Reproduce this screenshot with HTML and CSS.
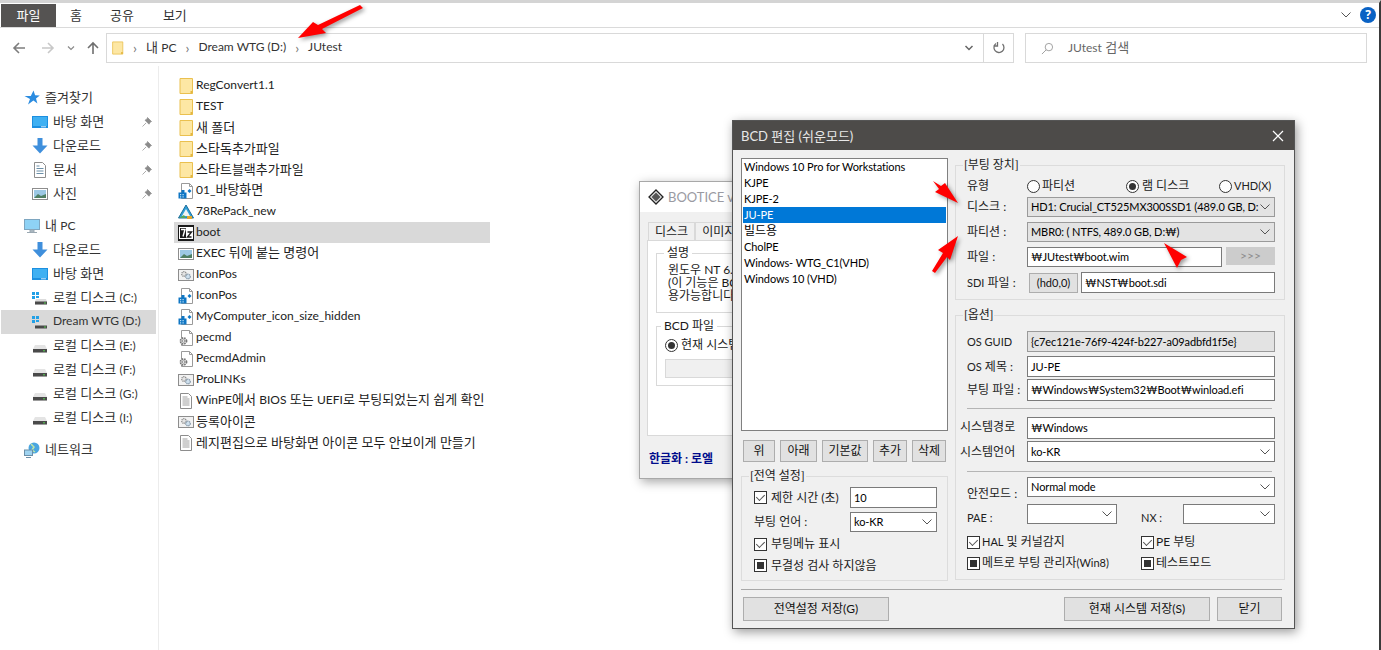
FILE: index.html
```html
<!DOCTYPE html>
<html lang="ko">
<head>
<meta charset="utf-8">
<title>JUtest</title>
<link rel="stylesheet" href="styles.css">
</head>
<body>
<svg class="defs" aria-hidden="true">
  <symbol id="i-folder" viewBox="0 0 16 16"><path d="M2 .5h12.500v15H2z" fill="#fde7a4" stroke="#eac04f"/><path d="M12.500 13h2v2.500h-2z" fill="#e3b63f"/></symbol>
  <symbol id="i-desktop" viewBox="0 0 16 16"><rect x="0" y="2" width="16" height="12" fill="#1c8fe0"/><rect x="1" y="3" width="14" height="9" fill="#3fb0f2"/><rect x="9" y="12.300" width="5" height="1" fill="#cfe9fb"/></symbol>
  <symbol id="i-down" viewBox="0 0 16 16"><path d="M5.500 0h5v7.500h5L8 15.500.5 7.500h5z" fill="#3f8fdc"/></symbol>
  <symbol id="i-doc" viewBox="0 0 16 16"><path d="M2.500.5h8l3 3v12h-11z" fill="#fff" stroke="#8d8d8d"/><path d="M4.500 4h3M4.500 6.500h7M4.500 9h7M4.500 11.500h7" stroke="#6b8fa8"/></symbol>
  <symbol id="i-pic" viewBox="0 0 16 16"><rect x=".5" y="2.500" width="15" height="11" fill="#fff" stroke="#8d8d8d"/><rect x="2" y="4" width="12" height="8" fill="#9cc8e4"/><path d="M2 12l4-4 3 2 5-2v4z" fill="#4f7f63"/></symbol>
  <symbol id="i-pin" viewBox="0 0 10 10"><path d="M5.500.5l4 4-1.200.6-1.300 2.100L3 3.200l2.100-1.300zM4 6l-3.500 3.500" fill="#8b8b8b" stroke="#8b8b8b" stroke-width=".7"/></symbol>
  <symbol id="i-pc" viewBox="0 0 16 16"><rect x=".5" y="1.500" width="15" height="10" fill="#8ed2f5" stroke="#7ea6c0"/><path d="M6 12h4v2H6zM3 14.500h10" fill="#b7c4cc" stroke="#9aa8b2"/></symbol>
  <symbol id="i-star" viewBox="0 0 16 16"><path d="M9.500.5l1.600 4.800 4.700.2-3.800 3 1.400 5-4-2.900-5.400 3.900L6 9 .5 6h6.300z" fill="#2b8ce0"/></symbol>
  <symbol id="i-drive" viewBox="0 0 16 16"><path d="M3 7h10l2 4v3.500H1V11z" fill="#e4e4e4"/><rect x="1" y="11" width="14" height="3.500" fill="#4a4a4a"/><rect x="11" y="12.300" width="2" height="1" fill="#55d04f"/></symbol>
  <symbol id="i-sysdrive" viewBox="0 0 16 16"><path d="M4 9h10l1 2.500v3H3v-3z" fill="#dcdcdc"/><rect x="3" y="11.500" width="12" height="3" fill="#4a4a4a"/><rect x="12" y="12.500" width="2" height="1" fill="#55d04f"/><path d="M0 2h3v3H0zM4 2h3v3H4zM0 6h3v3H0zM4 6h3v2H4z" fill="#22a0e6"/></symbol>
  <symbol id="i-net" viewBox="0 0 16 16"><circle cx="10" cy="6" r="5.500" fill="#4aa6e0"/><path d="M7 2l3 3-2 3 3 2" stroke="#bfe6a8" fill="none" stroke-width="1.500"/><rect x=".5" y="8" width="8" height="5.500" fill="#9fd3f0" stroke="#6b8fa8"/><path d="M2 15.500h5" stroke="#6b8fa8"/></symbol>
  <symbol id="i-reg" viewBox="0 0 16 16"><path d="M3.500.5h8l3 3v12h-11z" fill="#fff" stroke="#9a9a9a"/><path d="M11.500.5v3h3" fill="none" stroke="#9a9a9a"/><path d="M.5 9.500h8v6h-8z" fill="#0f76c4"/><path d="M3.500 7h3v3h-3z" fill="#0f76c4"/><path d="M9.500 8l2-2 2 2-2 2z" fill="#0f76c4"/><path d="M2 11h1.200v1.200H2zM4.500 11h1.200v1.200H4.500zM2 13.300h1.200v1.200H2zM4.500 13.300h1.200v1.200H4.500z" fill="#bfe2f7"/></symbol>
  <symbol id="i-wim" viewBox="0 0 16 16"><path d="M8 1L15.500 14H.5z" fill="#2f9fd8" stroke="#1c6d9a"/><path d="M8 5l4 7H4z" fill="#f3f3f3"/><path d="M1 14h7l-2-3z" fill="#58a85a"/><rect x="9" y="12" width="5" height="3" fill="#e2a72c"/></symbol>
  <symbol id="i-7z" viewBox="0 0 16 16"><rect width="16" height="16" fill="#1a1a1a"/><rect x="1" y="2" width="14" height="12" fill="#fff"/><rect x="2" y="3" width="6" height="10" fill="#1a1a1a"/><path d="M3 4.500h4l-2 7" stroke="#fff" stroke-width="1.400" fill="none"/><path d="M9.500 7h4l-4 5h4" stroke="#1a1a1a" stroke-width="1.400" fill="none"/></symbol>
  <symbol id="i-ini" viewBox="0 0 16 16"><rect x=".5" y="2.500" width="15" height="11" fill="#f2f2f2" stroke="#8d8d8d"/><circle cx="6" cy="7" r="2.300" fill="#e4e4e4" stroke="#8a8a8a" stroke-width="1.200" stroke-dasharray="1.200 .6"/><circle cx="10" cy="9.500" r="2.300" fill="#cfe0ee" stroke="#7f93a5" stroke-width="1.200" stroke-dasharray="1.200 .6"/></symbol>
  <symbol id="i-cmd" viewBox="0 0 16 16"><path d="M3.500.5h8l3 3v12h-11z" fill="#fff" stroke="#9a9a9a"/><path d="M11.500.5v3h3" fill="none" stroke="#9a9a9a"/><circle cx="5.500" cy="11" r="3" fill="#e6e6e6" stroke="#777" stroke-width="1.800" stroke-dasharray="1.500 .9"/><circle cx="5.500" cy="11" r="1.200" fill="#fff" stroke="#777" stroke-width=".7"/></symbol>
  <symbol id="i-txt" viewBox="0 0 16 16"><path d="M2.500.5h8l3 3v12h-11z" fill="#fff" stroke="#8d8d8d"/><path d="M4.500 4h5M4.500 6h7M4.500 8h7M4.500 10h7M4.500 12h7" stroke="#a0a0a0"/></symbol>
  <symbol id="i-chev" viewBox="0 0 12 12"><path d="M1.500 3.500L6 8l4.500-4.500" fill="none" stroke="#555" stroke-width="1"/></symbol>
</svg>

<div class="explorer">
  <div class="tabs">
    <span class="tab tab-file">파일</span>
    <span class="tab tab-home">홈</span>
    <span class="tab tab-share">공유</span>
    <span class="tab tab-view">보기</span>
    <svg class="ribbon-chev"><use href="#i-chev"/></svg>
    <span class="help">?</span>
  </div>
  <div class="navbar">
    <div class="navbtns">
      <svg class="nav-arrow" viewBox="0 0 14 14"><path d="M13 7H2M7 2L2 7l5 5" fill="none" stroke="#7d7d7d" stroke-width="1.600"/></svg>
      <svg class="nav-arrow" viewBox="0 0 14 14"><path d="M1 7h11M7 2l5 5-5 5" fill="none" stroke="#c8c8c8" stroke-width="1.600"/></svg>
      <svg class="nav-small" viewBox="0 0 8 8"><path d="M1 2.500L4 5.500l3-3" fill="none" stroke="#8a8a8a" stroke-width="1.200"/></svg>
      <svg class="nav-arrow" viewBox="0 0 14 14"><path d="M7 13V2M2 7l5-5 5 5" fill="none" stroke="#6f6f6f" stroke-width="1.600"/></svg>
    </div>
    <div class="address">
      <svg class="addr-folder"><use href="#i-folder"/></svg>
      <span class="crumb-sep">›</span><span class="crumb">내 <span class="lat">PC</span></span>
      <span class="crumb-sep">›</span><span class="crumb lat">Dream WTG (D:)</span>
      <span class="crumb-sep">›</span><span class="crumb lat">JUtest</span>
      <svg class="addr-chev" viewBox="0 0 10 10"><path d="M1.500 3L5 6.500 8.500 3" fill="none" stroke="#666" stroke-width="1.500"/></svg>
      <span class="addr-refresh"><svg class="refresh" viewBox="0 0 14 14"><path d="M4 2.500a5 5 0 1 0 6.500.5M5.500 1v4H1.500" fill="none" stroke="#6f6f6f" stroke-width="1.300"/></svg></span>
    </div>
    <div class="search">
      <svg class="search-ico" viewBox="0 0 14 14"><circle cx="8.500" cy="5.500" r="4" fill="none" stroke="#9a9a9a"/><path d="M5.500 8.500L1 13" stroke="#9a9a9a"/></svg>
      <span class="crumb"><span class="lat">JUtest</span> 검색</span>
    </div>
  </div>
  <div class="main">
    <nav class="side">
      <div class="side-head first"><svg class="ico"><use href="#i-star"/></svg><span>즐겨찾기</span></div>
      <div class="side-item"><svg class="ico"><use href="#i-desktop"/></svg><span class="grow">바탕 화면</span><svg class="pin"><use href="#i-pin"/></svg></div>
      <div class="side-item"><svg class="ico"><use href="#i-down"/></svg><span class="grow">다운로드</span><svg class="pin"><use href="#i-pin"/></svg></div>
      <div class="side-item"><svg class="ico"><use href="#i-doc"/></svg><span class="grow">문서</span><svg class="pin"><use href="#i-pin"/></svg></div>
      <div class="side-item"><svg class="ico"><use href="#i-pic"/></svg><span class="grow">사진</span><svg class="pin"><use href="#i-pin"/></svg></div>
      <div class="side-head gap"><svg class="ico"><use href="#i-pc"/></svg><span>내 <span class="lat">PC</span></span></div>
      <div class="side-item"><svg class="ico"><use href="#i-down"/></svg><span>다운로드</span></div>
      <div class="side-item"><svg class="ico"><use href="#i-desktop"/></svg><span>바탕 화면</span></div>
      <div class="side-item"><svg class="ico"><use href="#i-sysdrive"/></svg><span>로컬 디스크 <span class="lat">(C:)</span></span></div>
      <div class="side-item active"><svg class="ico"><use href="#i-sysdrive"/></svg><span class="lat">Dream WTG (D:)</span></div>
      <div class="side-item"><svg class="ico"><use href="#i-drive"/></svg><span>로컬 디스크 <span class="lat">(E:)</span></span></div>
      <div class="side-item"><svg class="ico"><use href="#i-drive"/></svg><span>로컬 디스크 <span class="lat">(F:)</span></span></div>
      <div class="side-item"><svg class="ico"><use href="#i-drive"/></svg><span>로컬 디스크 <span class="lat">(G:)</span></span></div>
      <div class="side-item"><svg class="ico"><use href="#i-drive"/></svg><span>로컬 디스크 <span class="lat">(I:)</span></span></div>
      <div class="side-head gap"><svg class="ico"><use href="#i-net"/></svg><span>네트워크</span></div>
    </nav>
    <ul class="files">
      <li><svg class="ico"><use href="#i-folder"/></svg><span class="lat">RegConvert1.1</span></li>
      <li><svg class="ico"><use href="#i-folder"/></svg><span class="lat">TEST</span></li>
      <li><svg class="ico"><use href="#i-folder"/></svg><span>새 폴더</span></li>
      <li><svg class="ico"><use href="#i-folder"/></svg><span>스타독추가파일</span></li>
      <li><svg class="ico"><use href="#i-folder"/></svg><span>스타트블랙추가파일</span></li>
      <li><svg class="ico"><use href="#i-reg"/></svg><span><span class="lat">01_</span>바탕화면</span></li>
      <li><svg class="ico"><use href="#i-wim"/></svg><span class="lat">78RePack_new</span></li>
      <li class="selected"><svg class="ico"><use href="#i-7z"/></svg><span class="lat">boot</span></li>
      <li><svg class="ico"><use href="#i-pic"/></svg><span><span class="lat">EXEC</span> 뒤에 붙는 명령어</span></li>
      <li><svg class="ico"><use href="#i-ini"/></svg><span class="lat">IconPos</span></li>
      <li><svg class="ico"><use href="#i-reg"/></svg><span class="lat">IconPos</span></li>
      <li><svg class="ico"><use href="#i-reg"/></svg><span class="lat">MyComputer_icon_size_hidden</span></li>
      <li><svg class="ico"><use href="#i-cmd"/></svg><span class="lat">pecmd</span></li>
      <li><svg class="ico"><use href="#i-cmd"/></svg><span class="lat">PecmdAdmin</span></li>
      <li><svg class="ico"><use href="#i-ini"/></svg><span class="lat">ProLINKs</span></li>
      <li><svg class="ico"><use href="#i-txt"/></svg><span><span class="lat">WinPE</span>에서 <span class="lat">BIOS</span> 또는 <span class="lat">UEFI</span>로 부팅되었는지 쉽게 확인</span></li>
      <li><svg class="ico"><use href="#i-ini"/></svg><span>등록아이콘</span></li>
      <li><svg class="ico"><use href="#i-txt"/></svg><span>레지편집으로 바탕화면 아이콘 모두 안보이게 만들기</span></li>
    </ul>
  </div>
</div>

<section class="win bootice">
  <header class="bootice-title">
    <svg class="bootice-ico" viewBox="0 0 16 16"><path d="M8 1l7 7-7 7-7-7z" fill="#e8e8e8" stroke="#222" stroke-width="1.300"/><path d="M3.500 8L8 3.500 12.500 8 8 12.500z" fill="#555"/></svg>
    <span>BOOTICE v1</span>
  </header>
  <div class="bootice-tabs"><span class="btab">디스크</span><span class="btab">이미지</span></div>
  <div class="bootice-panel">
    <fieldset class="bgroup bgroup-a">
      <legend>설명</legend>
      <p>윈도우 NT 6.x<br>(이 기능은 BC<br>용가능합니다</p>
    </fieldset>
    <fieldset class="bgroup bgroup-b">
      <legend>BCD 파일</legend>
      <div class="bradio"><i class="radio on"></i>현재 시스템</div>
      <div class="bfield"></div>
    </fieldset>
  </div>
  <div class="bootice-foot">한글화 : 로엘</div>
</section>

<section class="win dialog">
  <header class="dlg-title"><span>BCD 편집 (쉬운모드)</span>
    <svg class="dlg-close" viewBox="0 0 12 12"><path d="M1 1l10 10M11 1L1 11" stroke="#fff" stroke-width="1.200"/></svg>
  </header>
  <div class="dlg-body">
    <div class="dlg-left">
      <ul class="listbox">
        <li>Windows 10 Pro for Workstations</li>
        <li>KJPE</li>
        <li>KJPE-2</li>
        <li class="sel">JU-PE</li>
        <li><span class="k">빌드용</span></li>
        <li>CholPE</li>
        <li>Windows- WTG_C1(VHD)</li>
        <li>Windows 10 (VHD)</li>
      </ul>
      <div class="list-btns">
        <span class="btn b-up">위</span><span class="btn b-down">아래</span><span class="btn b-def">기본값</span><span class="btn b-add">추가</span><span class="btn b-del">삭제</span>
      </div>
      <div class="group group-global">
        <span class="legend">[전역 설정]</span>
        <div class="g-row g-r1"><i class="chk on"></i><span class="g-label">제한 시간 (초)</span><span class="field g-field">10</span></div>
        <div class="g-row g-r2"><span class="g-label2">부팅 언어 :</span><span class="field combo g-field">ko-KR<svg class="chev"><use href="#i-chev"/></svg></span></div>
        <div class="g-row g-r3"><i class="chk on"></i>부팅메뉴 표시</div>
        <div class="g-row g-r4"><i class="chk mid"></i>무결성 검사 하지않음</div>
      </div>
    </div>
    <div class="dlg-right">
      <div class="group group-boot">
        <span class="legend">[부팅 장치]</span>
        <div class="f-row r-type"><span class="lab">유형</span>
          <span class="rad rad1"><i class="radio"></i>파티션</span>
          <span class="rad rad2"><i class="radio on"></i>램 디스크</span>
          <span class="rad rad3"><i class="radio"></i><span class="lat">VHD(X)</span></span>
        </div>
        <div class="f-row r-disk"><span class="lab">디스크 :</span><span class="field combo ro wide">HD1: Crucial_CT525MX300SSD1 (489.0 GB, D:<svg class="chev"><use href="#i-chev"/></svg></span></div>
        <div class="f-row r-part"><span class="lab">파티션 :</span><span class="field combo ro wide">MBR0: ( NTFS, 489.0 GB, D:₩)<svg class="chev"><use href="#i-chev"/></svg></span></div>
        <div class="f-row r-file"><span class="lab">파일 :</span><span class="field file">₩JUtest₩boot.wim</span><span class="btn more">&gt;&gt;&gt;</span></div>
        <div class="f-row r-sdi"><span class="lab"><span class="lat">SDI</span> 파일 :</span><span class="btn hd">(hd0,0)</span><span class="field sdi">₩NST₩boot.sdi</span></div>
      </div>
      <div class="group group-opt">
        <span class="legend">[옵션]</span>
        <div class="f-row r-guid"><span class="lab lat">OS GUID</span><span class="field ro wide">{c7ec121e-76f9-424f-b227-a09adbfd1f5e}</span></div>
        <div class="f-row r-os"><span class="lab"><span class="lat">OS</span> 제목 :</span><span class="field wide">JU-PE</span></div>
        <div class="f-row r-bf"><span class="lab">부팅 파일 :</span><span class="field wide">₩Windows₩System32₩Boot₩winload.efi</span></div>
        <hr class="sep sep1">
        <div class="f-row r-sys"><span class="lab out up">시스템경로</span><span class="field wide">₩Windows</span></div>
        <div class="f-row r-lang"><span class="lab out">시스템언어</span><span class="field combo wide">ko-KR<svg class="chev"><use href="#i-chev"/></svg></span></div>
        <hr class="sep sep2">
        <div class="f-row r-safe"><span class="lab low-a">안전모드 :</span><span class="field combo wide">Normal mode<svg class="chev"><use href="#i-chev"/></svg></span></div>
        <div class="f-row r-pae"><span class="lab lat low-b">PAE :</span><span class="field combo pae"><svg class="chev"><use href="#i-chev"/></svg></span><span class="nx-lab lat low-b">NX :</span><span class="field combo nx"><svg class="chev"><use href="#i-chev"/></svg></span></div>
        <div class="c-row c1"><span class="c-a"><i class="chk on"></i><span><span class="lat">HAL</span> 및 커널감지</span></span><span class="c-b"><i class="chk on"></i>PE 부팅</span></div>
        <div class="c-row c2"><span class="c-a"><i class="chk mid"></i><span>메트로 부팅 관리자<span class="lat">(Win8)</span></span></span><span class="c-b"><i class="chk mid"></i>테스트모드</span></div>
      </div>
    </div>
  </div>
  <div class="dlg-foot">
    <span class="btn foot-g">전역설정 저장(G)</span>
    <span class="foot-space"></span>
    <span class="btn foot-s">현재 시스템 저장(S)</span>
    <span class="btn foot-c">닫기</span>
  </div>
</section>

<svg class="arrows" viewBox="0 0 1381 650" aria-hidden="true">
  <path d="M298 38L313 22 318 25 360 5 363 8 322 29 326 33z"/>
  <path d="M933 181L941 186 945 183 958 203 935 192 939 189z"/>
  <path d="M958 236L938 250 943 253 932 271 935 273 947 257 950 260z"/>
  <path d="M1164 243L1187 257 1181 260 1177 268z"/>
</svg>
</body>
</html>
```
FILE: styles.css
```css
* { box-sizing: border-box; }
html, body { margin: 0; height: 100%; overflow: hidden; }
body {
  width: 1381px; height: 650px; position: relative; background: #fff;
  font: 13px/16px Lato, "Noto Sans CJK KR", sans-serif; color: #1a1a1a;
}
.defs { position: absolute; width: 0; height: 0; }
ul { list-style: none; margin: 0; padding: 0; }
.ico { width: 16px; height: 16px; flex: none; }
.grow { flex: 1; }
.explorer .lat { font-size: 12px; }

/* Explorer */
.explorer { height: 650px; display: flex; flex-direction: column; border-top: 3px solid #d4d4d4; border-right: 2px solid #3a3a3a; }
.tabs { height: 25px; flex: none; display: flex; align-items: center; border-bottom: 1px solid #dadada; padding-right: 3px; }
.tab { height: 23px; display: flex; align-items: center; color: #333; }
.tab-file { width: 55px; margin-left: 1px; background: #555352; color: #fff; justify-content: center; }
.tab-home { margin-left: 14px; }
.tab-share { margin-left: 28px; }
.tab-view { margin-left: 29px; }
.ribbon-chev { width: 12px; height: 12px; margin-left: auto; }
.help { width: 16px; height: 16px; margin-left: 8px; border-radius: 50%; background: #0a62c4; color: #fff; font: bold 12px/16px "Noto Sans", sans-serif; text-align: center; }
.navbar { height: 38px; flex: none; display: flex; align-items: center; padding-top: 2px; }
.navbtns { width: 106px; flex: none; display: flex; align-items: center; padding-left: 12px; }
.nav-arrow { width: 14px; height: 14px; }
.nav-arrow:nth-child(2) { margin-left: 15px; }
.nav-small { width: 8px; height: 8px; margin-left: 12px; }
.nav-arrow:nth-child(4) { margin-left: 11px; }
.address { width: 908px; height: 30px; flex: none; display: flex; align-items: center; border: 1px solid #d9d9d9; padding-left: 4px; color: #333; }
.addr-folder { width: 13px; height: 16px; }
.crumb { margin-bottom: 2px; }
.crumb-sep { margin: 0 9px 0 9px; color: #777; font-size: 14px; line-height: 14px; }
.addr-chev { width: 10px; height: 10px; margin-left: auto; margin-right: 9px; }
.addr-refresh { width: 30px; height: 28px; border-left: 1px solid #d9d9d9; display: flex; align-items: center; justify-content: center; }
.refresh { width: 14px; height: 14px; }
.search { width: 342px; height: 30px; flex: none; margin-left: 11px; display: flex; align-items: center; border: 1px solid #d9d9d9; padding-left: 15px; color: #666; gap: 14px; }
.search-ico { width: 13px; height: 13px; }
.main { flex: 1; display: flex; min-height: 0; }
.side { width: 159px; flex: none; border-right: 1px solid #ececec; padding-top: 20px; }
.side-head { height: 24px; display: flex; align-items: center; gap: 5px; padding: 0 0 2px 24px; color: #333; }
.side-head.gap { margin-top: 8px; }
.side-item { height: 24px; display: flex; align-items: center; gap: 5px; padding: 0 6px 2px 32px; color: #333; }
.side-item .ico, .side-head .ico, .side-item .pin { margin-top: 2px; }
.side-item.active { background: #d9d9d9; margin-left: 1px; padding-left: 31px; width: 155px; }
.pin { width: 10px; height: 10px; }
.files { padding: 9px 0 0 15px; width: 331px; }
.files li { height: 21px; display: flex; align-items: center; gap: 2px; padding: 0 0 2px 4px; color: #222; white-space: nowrap; }
.files li .ico { margin-top: 2px; }
.files li.selected { background: #d9d9d9; }

/* Windows on the desktop */
.win { position: absolute; }
.bootice { left: 639px; top: 181px; width: 110px; height: 298px; background: #f0f0f0; border: 1px solid #a8a8a8; box-shadow: 2px 3px 10px rgba(0,0,0,.35); overflow: hidden; display: flex; flex-direction: column; font-size: 12px; }
.bootice-title { height: 30px; flex: none; background: #fff; display: flex; align-items: center; gap: 4px; padding-left: 8px; color: #9a9aa2; font-size: 13px; white-space: nowrap; }
.bootice-ico { width: 16px; height: 16px; flex: none; }
.bootice-tabs { height: 28px; flex: none; display: flex; padding: 10px 0 0 8px; white-space: nowrap; }
.btab { padding: 1px 6px; border: 1px solid #d9d9d9; border-bottom: 0; background: #f0f0f0; }
.bootice-panel { height: 196px; width: 120px; flex: none; margin-left: 7px; background: #fff; border: 1px solid #d9d9d9; padding: 4px 0 0 8px; }
.bgroup { border: 1px solid #d9d9d9; margin: 0; padding: 0 0 0 11px; white-space: nowrap; }
.bgroup legend { padding: 0 3px; margin-left: -4px; }
.bgroup p { margin: 2px 0 0; line-height: 13px; }
.bgroup-a { height: 68px; }
.bgroup-b { height: 68px; margin-top: 5px; padding-left: 8px; }
.bradio { display: flex; align-items: center; gap: 3px; margin-top: 3px; }
.bfield { height: 19px; margin-top: 6px; background: #f0f0f0; border: 1px solid #d9d9d9; margin-right: -20px; }
.bootice-foot { padding: 15px 0 0 9px; color: #000c8c; font-weight: 700; white-space: nowrap; }

.dialog { left: 732px; top: 120px; width: 563px; height: 509px; background: #f0f0f0; border: 1px solid #555; box-shadow: 2px 3px 10px rgba(0,0,0,.4); display: flex; flex-direction: column; font-size: 12px; }
.dialog .lat { font-size: 11px; }
.dlg-title { height: 29px; flex: none; background: #4d4b49; color: #e8e8e8; font-size: 13px; display: flex; align-items: center; justify-content: space-between; padding: 0 10px 0 8px; }
.dlg-close { width: 12px; height: 12px; }
.dlg-body { height: 439px; flex: none; display: flex; padding: 8px 0 0 8px; }
.dlg-left { width: 207px; flex: none; }
.dlg-right { width: 330px; flex: none; margin-left: 7px; padding-top: 7px; }
.listbox { height: 273px; background: #fff; border: 1px solid #808080; font-size: 11px; letter-spacing: -.1px; }
.listbox .k { font-size: 12px; letter-spacing: 0; }
.listbox li { height: 16px; padding-left: 2px; color: #000; white-space: nowrap; }
.listbox li.sel { background: #0078d7; color: #fff; margin-left: 1px; padding-left: 1px; margin-right: 1px; }
.list-btns { height: 22px; margin-top: 9px; display: flex; padding-left: 2px; }
.btn { display: flex; align-items: center; justify-content: center; background: #e1e1e1; border: 1px solid #adadad; color: #111; white-space: nowrap; }
.b-up { width: 32px; }
.b-down { width: 37px; margin-left: 5px; }
.b-def { width: 46px; margin-left: 5px; }
.b-add { width: 34px; margin-left: 5px; }
.b-del { width: 34px; margin-left: 5px; }
.group { position: relative; border: 1px solid #dcdcdc; }
.legend { position: absolute; left: 7px; top: -9px; padding: 0 1px; background: #f0f0f0; line-height: 16px; color: #222; white-space: nowrap; }
.group-global { height: 105px; margin-top: 14px; padding-left: 12px; }
.g-row { display: flex; align-items: center; white-space: nowrap; gap: 2px; }
.g-r1 { height: 21px; margin-top: 10px; }
.g-r2 { height: 20px; margin-top: 4px; }
.g-r3 { height: 22px; margin-top: 1px; }
.g-r4 { height: 21px; }
.g-label { width: 77px; }
.g-label2 { width: 94px; }
.field { display: flex; align-items: center; height: 100%; background: #fff; border: 1px solid #7a7a7a; padding-left: 3px; color: #000; font-size: 11px; letter-spacing: -.1px; white-space: nowrap; overflow: hidden; }
.g-field { width: 87px; flex: none; }
.combo { position: relative; }
.ro { background: #e3e3e3; border-color: #9a9a9a; }
.chev { position: absolute; right: 3px; top: 50%; width: 12px; height: 12px; margin-top: -6px; }
.chk { width: 13px; height: 13px; flex: none; display: inline-block; border: 1px solid #333; background: #fff; margin-right: 2px; position: relative; }
.chk.on::after { content: ""; position: absolute; left: 2px; top: 0; width: 7px; height: 4px; border-left: 1px solid #555; border-bottom: 1px solid #555; transform: translate(-0.500px, 2px) rotate(-45deg); }
.chk.mid::after { content: ""; position: absolute; left: 2px; top: 2px; width: 7px; height: 7px; background: #333; }
.radio { width: 13px; height: 13px; flex: none; display: inline-block; border: 1px solid #333; border-radius: 50%; background: #fff; position: relative; }
.radio.on::after { content: ""; position: absolute; left: 2px; top: 2px; width: 7px; height: 7px; border-radius: 50%; background: #333; }

.group-boot { height: 135px; padding: 0 9px 0 11px; }
.group-opt { height: 265px; margin-top: 15px; padding: 0 9px 0 11px; }
.f-row { display: flex; align-items: center; white-space: nowrap; color: #222; }
.lab { width: 60px; flex: none; }
.lab.out { margin-left: -7px; width: 67px; }
.lab.up { padding-bottom: 3px; }
.low-a { padding-top: 14px; }
.low-b { padding-top: 8px; }
.wide { width: 248px; flex: none; padding-right: 16px; }
.r-type { height: 16px; margin-top: 12px; }
.rad { display: flex; align-items: center; gap: 2px; }
.rad1 { width: 99px; }
.rad2 { width: 93px; gap: 3px; }
.r-disk { height: 20px; margin-top: 3px; }
.r-part { height: 20px; margin-top: 5px; }
.r-file { height: 20px; margin-top: 5px; }
.file { width: 195px; flex: none; }
.more { width: 49px; height: 18px; margin-left: 4px; align-self: flex-start; background: #ccc; border-color: #ccc; color: #8d8d8d; }
.r-sdi { height: 21px; margin-top: 5px; }
.hd { width: 49px; height: 20px; margin-left: 2px; font-size: 11px; }
.sdi { width: 194px; flex: none; margin-left: 3px; }
.r-guid { height: 21px; margin-top: 15px; }
.r-os { height: 21px; margin-top: 4px; }
.r-bf { height: 22px; margin-top: 2px; }
.sep { height: 0; margin: 0; border: 0; border-top: 1px solid #b5b5b5; width: 305px; }
.sep1 { margin-top: 7px; }
.r-sys { height: 22px; margin-top: 8px; }
.r-lang { height: 21px; margin-top: 2px; }
.sep2 { margin-top: 9px; }
.r-safe { height: 20px; margin-top: 5px; }
.r-pae { height: 20px; margin-top: 7px; }
.pae { width: 90px; flex: none; }
.nx-lab { width: 66px; flex: none; padding-left: 24px; }
.nx { width: 92px; flex: none; }
.c-row { display: flex; height: 22px; align-items: center; white-space: nowrap; }
.c1 { margin-top: 7px; }
.c2 { margin-top: -1px; }
.c-a { width: 174px; display: flex; align-items: center; }
.c-b { display: flex; align-items: center; }
.dlg-foot { height: 39px; flex: none; margin: 0 12px 0 8px; border-top: 1px solid #a8a8a8; display: flex; align-items: flex-start; padding: 7px 0 0 2px; }
.dlg-foot .btn { height: 24px; }
.foot-g { width: 146px; }
.foot-space { flex: 1; }
.foot-s { width: 146px; }
.foot-c { width: 65px; margin-left: 7px; }

.arrows { position: absolute; left: 0; top: 0; width: 1381px; height: 650px; pointer-events: none; filter: drop-shadow(2px 2px 2px rgba(0,0,0,.4)); }
.arrows path { fill: #f00; }
```
